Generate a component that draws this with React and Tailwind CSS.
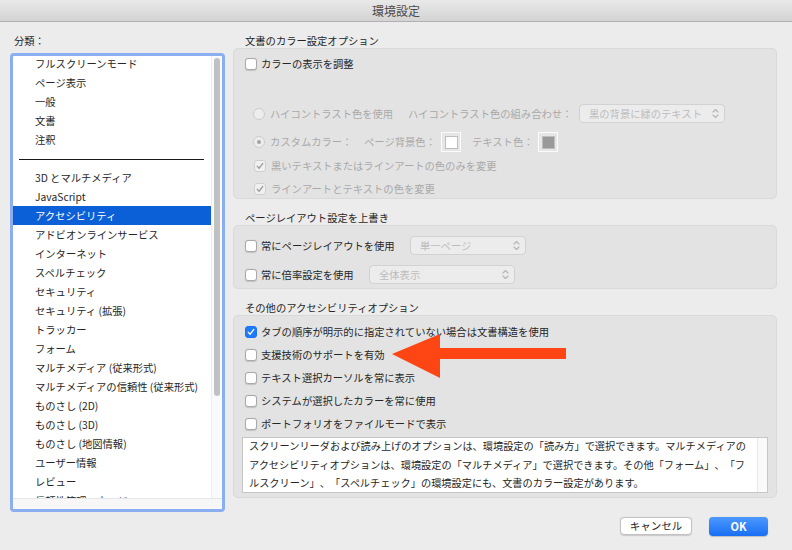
import React from "react";

const categories = [
  "フルスクリーンモード",
  "ページ表示",
  "一般",
  "文書",
  "注釈",
  "---",
  "3D とマルチメディア",
  "JavaScript",
  "アクセシビリティ",
  "アドビオンラインサービス",
  "インターネット",
  "スペルチェック",
  "セキュリティ",
  "セキュリティ (拡張)",
  "トラッカー",
  "フォーム",
  "マルチメディア (従来形式)",
  "マルチメディアの信頼性 (従来形式)",
  "ものさし (2D)",
  "ものさし (3D)",
  "ものさし (地図情報)",
  "ユーザー情報",
  "レビュー",
  "信頼性管理マネージャー",
];

const CheckBox = ({ checked = false, disabled = false, blue = false }) => (
  <span
    className={`flex h-[12px] w-[12px] shrink-0 items-center justify-center rounded-[3px] border ${
      blue
        ? "border-[#1a72f4] bg-[#1f7af7]"
        : disabled
        ? "border-[#cfcfcf] bg-[#f0f0f0]"
        : "border-[#a9a9a9] bg-white shadow-[0_0.5px_1px_rgba(0,0,0,0.15)]"
    }`}
  >
    {checked && (
      <svg viewBox="0 0 12 12" className="h-[10px] w-[10px]">
        <path
          d="M2.6 6.2 L4.9 8.7 L9.4 2.9"
          fill="none"
          stroke={blue ? "#ffffff" : "#9b9b9b"}
          strokeWidth="1.5"
          strokeLinecap="round"
          strokeLinejoin="round"
        />
      </svg>
    )}
  </span>
);

const Radio = ({ selected = false }) => (
  <span className="flex h-[12px] w-[12px] shrink-0 items-center justify-center rounded-full border border-[#cccccc] bg-[#ededed]">
    {selected && <span className="h-[4px] w-[4px] rounded-full bg-[#a3a3a3]"></span>}
  </span>
);

const Chevrons = () => (
  <svg viewBox="0 0 7 11" className="h-[11px] w-[7px]">
    <path
      d="M1 4 L3.5 1.5 L6 4 M1 7 L3.5 9.5 L6 7"
      fill="none"
      stroke="#b5b5b5"
      strokeWidth="1.1"
      strokeLinecap="round"
      strokeLinejoin="round"
    />
  </svg>
);

const Select = ({ label, width }) => (
  <div
    className={`flex h-[19px] shrink-0 items-center justify-between rounded-[4px] border border-[#d2d2d2] bg-[#ececec] pl-[9px] pr-[5px] text-[#bcbcbc] ${width}`}
  >
    <span className="whitespace-nowrap">{label}</span>
    <Chevrons />
  </div>
);

const Swatch = ({ fill }) => (
  <div className="flex h-[20px] w-[20px] shrink-0 items-center justify-center border border-[#fbfbfb] bg-[#e6e6e6]">
    <div className={`h-[13px] w-[13px] border border-[#bdbdbd] ${fill}`}></div>
  </div>
);

const SectionTitle = ({ children, className = "" }) => (
  <div className={`h-[14px] pl-[12px] leading-[14px] text-[#262626] ${className}`}>{children}</div>
);

const App = () => {
  return (
    <div className="relative h-[550px] w-[792px] overflow-hidden bg-[#ececec] font-['Noto_Sans_CJK_JP','Noto_Sans',sans-serif] text-[10.3px] text-[#262626] [text-spacing-trim:space-all]">
      {/* title bar */}
      <div className="flex h-[22px] items-center justify-center border-b border-[#b1b1b1] bg-gradient-to-b from-[#e9e9e9] to-[#d3d3d3]">
        <span className="text-[12px] text-[#4c4c4c]">環境設定</span>
      </div>

      <div className="flex">
        {/* categories */}
        <div className="w-[225px] pl-[10px]">
          <div className="mt-[12px] h-[14px] pl-[4px] leading-[14px]">分類：</div>
          <div className="mt-[5px] flex h-[459px] w-[215px] flex-col overflow-hidden rounded-[4px] border-[3px] border-[#8aaef0] bg-white">
            <div className="flex h-[442px]">
              <div className="w-[198px] overflow-hidden">
                <div className="-mt-[2px]">
                  {categories.map((c, i) =>
                    c === "---" ? (
                      <div key={i} className="flex h-[19px] items-end pb-[8px] pl-[6px] pr-[7px]">
                        <div className="h-px w-full bg-[#1a1a1a]"></div>
                      </div>
                    ) : (
                      <div
                        key={i}
                        className={`flex h-[19px] items-center whitespace-nowrap pl-[22px] ${
                          c === "アクセシビリティ" ? "bg-[#0b60d8] text-white" : ""
                        }`}
                      >
                        {c}
                      </div>
                    )
                  )}
                </div>
              </div>
              <div className="w-[11px] border-l border-[#ededed] bg-[#fafafa] pt-[2px]">
                <div className="ml-[2px] h-[338px] w-[6px] rounded-full bg-[#c1c1c1]"></div>
              </div>
            </div>
            <div className="h-[11px] border-t border-[#e6e6e6] bg-[#f7f7f7]"></div>
          </div>
        </div>

        {/* options */}
        <div className="ml-[8px] w-[544px]">
          <SectionTitle className="mt-[12px]">文書のカラー設定オプション</SectionTitle>
          <div className="h-[151px] rounded-[5px] border border-[#d9d9d9] bg-[#e3e3e3] pl-[11px] pt-[5px]">
            <div className="flex h-[19px] items-center gap-[4px]">
              <CheckBox />
              <span>カラーの表示を調整</span>
            </div>
            <div className="mt-[31px] flex h-[19px] items-center pl-[8px] text-[#a9a9a9]">
              <Radio />
              <span className="ml-[5px] w-[138px] whitespace-nowrap">ハイコントラスト色を使用</span>
              <span className="w-[171px] whitespace-nowrap">ハイコントラスト色の組み合わせ：</span>
              <Select label="黒の背景に緑のテキスト" width="w-[146px]" />
            </div>
            <div className="mt-[9px] flex h-[20px] items-center pl-[8px] text-[#a9a9a9]">
              <Radio selected />
              <span className="ml-[5px] w-[94px] whitespace-nowrap">カスタムカラー：</span>
              <span className="w-[77px] whitespace-nowrap">ページ背景色：</span>
              <Swatch fill="bg-white" />
              <span className="ml-[11px] w-[66px] whitespace-nowrap">テキスト色：</span>
              <Swatch fill="bg-[#999999]" />
            </div>
            <div className="mt-[4px] flex h-[19px] items-center gap-[5px] pl-[9px] text-[#a9a9a9]">
              <CheckBox checked disabled />
              <span>黒いテキストまたはラインアートの色のみを変更</span>
            </div>
            <div className="mt-[4px] flex h-[19px] items-center gap-[5px] pl-[9px] text-[#a9a9a9]">
              <CheckBox checked disabled />
              <span>ラインアートとテキストの色を変更</span>
            </div>
          </div>

          <SectionTitle className="mt-[12px]">ページレイアウト設定を上書き</SectionTitle>
          <div className="h-[64px] rounded-[5px] border border-[#d9d9d9] bg-[#e3e3e3] pl-[11px] pt-[10px]">
            <div className="flex h-[19px] items-center">
              <CheckBox />
              <span className="ml-[4px] w-[149px] whitespace-nowrap">常にページレイアウトを使用</span>
              <Select label="単一ページ" width="w-[116px]" />
            </div>
            <div className="mt-[10px] flex h-[19px] items-center">
              <CheckBox />
              <span className="ml-[4px] w-[108px] whitespace-nowrap">常に倍率設定を使用</span>
              <Select label="全体表示" width="w-[146px]" />
            </div>
          </div>

          <SectionTitle className="mt-[12px]">その他のアクセシビリティオプション</SectionTitle>
          <div className="h-[183px] rounded-[5px] border border-[#d9d9d9] bg-[#e3e3e3] pt-[6px]">
            {[
              ["タブの順序が明示的に指定されていない場合は文書構造を使用", true],
              ["支援技術のサポートを有効", false],
              ["テキスト選択カーソルを常に表示", false],
              ["システムが選択したカラーを常に使用", false],
              ["ポートフォリオをファイルモードで表示", false],
            ].map(([t, on], i) => (
              <div key={i} className={`flex h-[19px] items-center gap-[4px] pl-[11px] ${i ? "mt-[4px]" : ""}`}>
                <CheckBox checked={on} blue={on} />
                <span className="whitespace-nowrap">{t}</span>
              </div>
            ))}
            <div className="ml-[8px] mt-[4px] flex h-[56px] w-[526px] overflow-hidden border border-[#c6c6c6] bg-white">
              <div className="-mt-[1px] min-w-0 flex-1 overflow-hidden whitespace-nowrap pl-[6px] text-[10.2px] leading-[18.5px]">
                <div>スクリーンリーダおよび読み上げのオプションは、環境設定の「読み方」で選択できます。マルチメディアの</div>
                <div>アクセシビリティオプションは、環境設定の「マルチメディア」で選択できます。その他「フォーム」、「フ</div>
                <div>ルスクリーン」、「スペルチェック」の環境設定にも、文書のカラー設定があります。</div>
              </div>
              <div className="w-[10px] shrink-0 border-l border-[#e8e8e8] bg-[#fafafa]"></div>
            </div>
          </div>

          <div className="mt-[19px] flex justify-end gap-[17px] pr-[9px]">
            <button className="flex h-[18px] w-[72px] items-center justify-center rounded-[4px] border border-[#c2c2c2] bg-white text-[10.5px] text-[#262626] shadow-[0_0.5px_1px_rgba(0,0,0,0.15)]">
              キャンセル
            </button>
            <button className="flex h-[19px] w-[59px] items-center justify-center rounded-[4px] bg-gradient-to-b from-[#4b98fd] to-[#176ef5] text-[11px] font-semibold text-white shadow-[0_0.5px_1px_rgba(0,0,0,0.2)]">
              OK
            </button>
          </div>
        </div>
      </div>

      {/* annotation arrow */}
      <svg
        className="pointer-events-none absolute left-[390px] top-[332px] h-[48px] w-[178px]"
        viewBox="0 0 178 48"
      >
        <polygon points="2,22 50,2 50,16 176,16 176,27 50,27 50,46" fill="#fd4614" />
      </svg>
    </div>
  );
};

export default App;
